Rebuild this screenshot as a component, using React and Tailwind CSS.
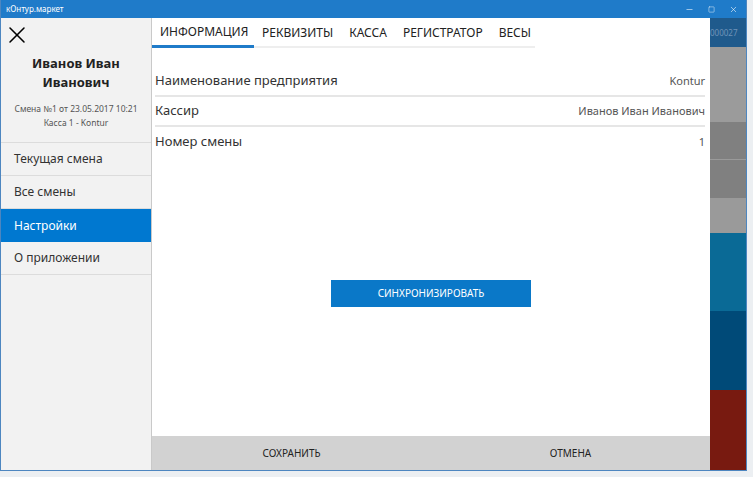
import { X, Minus, Square } from 'lucide-react'

const tabs = ['ИНФОРМАЦИЯ', 'РЕКВИЗИТЫ', 'КАССА', 'РЕГИСТРАТОР', 'ВЕСЫ']
const menu = ['Текущая смена', 'Все смены', 'Настройки', 'О приложении']
const rows = [
  { label: 'Наименование предприятия', value: 'Kontur' },
  { label: 'Кассир', value: 'Иванов Иван Иванович' },
  { label: 'Номер смены', value: '1' },
]

export default function App() {
  return (
    <div className="w-[753px] h-[477px] overflow-hidden bg-[#eceff2] font-['Noto_Sans',sans-serif]">
      <div className="w-[747px] h-[471px] flex flex-col border border-[#4d86c0] border-t-0 bg-white">
        <div className="h-[18px] bg-[#1f7bc9] flex items-center justify-between text-white">
          <span className="pl-[5px] text-[8px] leading-none">кОнтур.маркет</span>
          <div className="flex items-center gap-[14px] pr-[8px]">
            <Minus size={9} strokeWidth={1.5} />
            <Square size={7} strokeWidth={1.5} />
            <X size={9} strokeWidth={1.5} />
          </div>
        </div>

        <div className="flex flex-1 min-h-0">
          <aside className="w-[151px] bg-[#f2f2f2] border-r border-[#c9c9c9] flex flex-col">
            <div className="h-[124px] flex flex-col">
              <X className="ml-[2px] mt-[3px] text-black" size={28} strokeWidth={1.3} />
              <div className="mt-[5px] text-center text-[13px] font-bold leading-[19px] text-[#222]">
                Иванов Иван
                <br />
                Иванович
              </div>
              <div className="mt-[10px] text-center text-[8.5px] leading-[14px] text-[#555]">
                Смена №1 от 23.05.2017 10:21
                <br />
                Касса 1 - Kontur
              </div>
            </div>
            <div className="border-t border-[#dcdcdc]">
              {menu.map((m) => (
                <div
                  key={m}
                  className={
                    m === 'Настройки'
                      ? 'h-[33px] flex items-center pl-[13px] text-[12px] bg-[#0078d0] text-white'
                      : 'h-[33px] flex items-center pl-[13px] text-[12px] text-[#333] border-b border-[#dcdcdc]'
                  }
                >
                  {m}
                </div>
              ))}
            </div>
          </aside>

          <main className="flex-1 flex flex-col">
            <div className="flex w-[383px] border-b-[2px] border-[#eeeeee] h-[30px]">
              {tabs.map((t, i) => (
                <div
                  key={t}
                  className={
                    i === 0
                      ? 'h-[30px] -mb-[2px] px-[8px] flex items-center text-[12px] text-[#222] border-b-[3px] border-[#1f7bc9] w-[102px]'
                      : 'h-[30px] px-[8px] flex items-center text-[12px] text-[#222]'
                  }
                >
                  {t}
                </div>
              ))}
            </div>

            <div className="pl-[3px] pr-[5px] pt-[19px]">
              {rows.map((r, i) => (
                <div
                  key={r.label}
                  className={
                    i < rows.length - 1
                      ? 'h-[30px] flex items-center justify-between border-b-[2px] border-[#e6e6e6]'
                      : 'h-[30px] flex items-center justify-between'
                  }
                >
                  <span className="text-[13px] text-[#333]">{r.label}</span>
                  <span className="text-[11px] text-[#555]">{r.value}</span>
                </div>
              ))}
            </div>

            <div className="flex-1 flex justify-center pt-[123px]">
              <button className="w-[200px] h-[27px] bg-[#0a78c8] text-white text-[10px]">СИНХРОНИЗИРОВАТЬ</button>
            </div>

            <div className="h-[34px] bg-[#d2d2d2] flex text-[10px] text-[#222]">
              <div className="flex-1 flex items-center justify-center">СОХРАНИТЬ</div>
              <div className="flex-1 flex items-center justify-center">ОТМЕНА</div>
            </div>
          </main>

          <div className="w-[36px] flex flex-col">
            <div className="h-[29px] bg-[#1f5a8c] text-[8px] text-[#6f93b8] flex items-center overflow-hidden">000027</div>
            <div className="h-[75px] bg-[#9b9b9b]" />
            <div className="h-[38px] bg-[#808080] border-b border-[#9a9a9a]" />
            <div className="h-[38px] bg-[#808080]" />
            <div className="h-[35px] bg-[#9a9a9a]" />
            <div className="h-[78px] bg-[#0a6a96]" />
            <div className="h-[79px] bg-[#004a78]" />
            <div className="flex-1 bg-[#781a10]" />
          </div>
        </div>
      </div>
    </div>
  )
}
